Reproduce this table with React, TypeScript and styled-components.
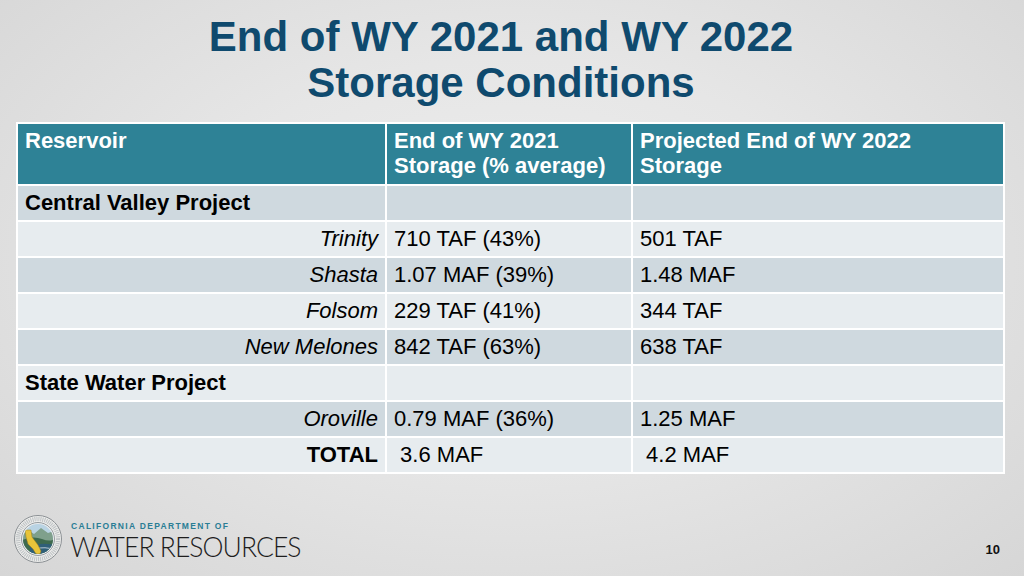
import React from "react";
import styled, { createGlobalStyle } from "styled-components";

const GlobalStyle = createGlobalStyle`
  * { box-sizing: border-box; }
  html, body { margin: 0; padding: 0; }
  body { font-family: "Liberation Sans", Arial, sans-serif; }
`;

const Slide = styled.div`
  width: 1024px;
  height: 576px;
  overflow: hidden;
  display: flex;
  flex-direction: column;
  background: radial-gradient(ellipse at 50% 45%, #eeeeee 0%, #e6e6e6 45%, #d6d6d6 100%);
`;

const Title = styled.h1`
  margin: 14px 0 0 0;
  padding-right: 22px;
  font-family: "Liberation Sans", Arial, sans-serif;
  font-weight: 700;
  font-size: 42px;
  line-height: 46px;
  color: #0f4a6e;
  text-align: center;
`;

const TableWrap = styled.div`
  margin: 16px 0 0 16px;
`;

const Table = styled.table`
  border-collapse: separate;
  border-spacing: 2px;
  background: #ffffff;
  width: 989px;
  table-layout: fixed;
  font-family: "Liberation Sans", Arial, sans-serif;
  font-size: 22px;
  color: #000;
`;

const HeadCell = styled.th`
  background: #2e8296;
  color: #ffffff;
  font-weight: 700;
  text-align: left;
  vertical-align: top;
  height: 60px;
  padding: 4px 7px 0 7px;
  line-height: 25px;
`;

const Row = styled.tr<{ $dark: boolean }>`
  background: ${(p) => (p.$dark ? "#cfd9df" : "#e7ecef")};
`;

const Cell = styled.td<{ $align?: "left" | "right"; $italic?: boolean; $bold?: boolean }>`
  height: 34px;
  padding: 0 7px;
  line-height: 24px;
  vertical-align: middle;
  white-space: nowrap;
  text-align: ${(p) => p.$align ?? "left"};
  font-style: ${(p) => (p.$italic ? "italic" : "normal")};
  font-weight: ${(p) => (p.$bold ? 700 : 400)};
`;

const Footer = styled.div`
  margin-top: auto;
  display: flex;
  justify-content: space-between;
  align-items: flex-end;
  padding: 0 24px 13px 14px;
`;

const Brand = styled.div`
  display: flex;
  align-items: center;
  gap: 8px;
`;

const BrandText = styled.div`
  display: flex;
  flex-direction: column;
  padding-top: 2px;
`;

const BrandSmall = styled.div`
  font-family: "Liberation Sans", Arial, sans-serif;
  font-weight: 700;
  font-size: 8.5px;
  letter-spacing: 1.3px;
  color: #2a7d95;
  line-height: 9px;
  margin-left: 1px;
`;

const BrandLarge = styled.div`
  font-family: Lato, "Open Sans", sans-serif;
  font-weight: 300;
  font-size: 26.5px;
  line-height: 24px;
  color: #1e1e1e;
  letter-spacing: -0.95px;
  margin-top: 4px;
`;

const PageNum = styled.div`
  font-family: "Liberation Sans", Arial, sans-serif;
  font-weight: 700;
  font-size: 13px;
  color: #111;
  margin-bottom: 6px;
`;

const Seal = () => (
  <svg width="48" height="48" viewBox="0 0 48 48">
    <circle cx="24" cy="24" r="23.5" fill="#f1f1ef" stroke="#8a8f93" strokeWidth="1" />
    <circle cx="24" cy="24" r="20" fill="none" stroke="#9aa3a8" strokeWidth="4.5" strokeDasharray="1.2 0.8" opacity="0.55" />
    <circle cx="24" cy="24" r="16.5" fill="#e9ecee" stroke="#7f878c" strokeWidth="0.8" />
    <clipPath id="inner">
      <circle cx="24" cy="24" r="15" />
    </clipPath>
    <g clipPath="url(#inner)">
      <rect x="0" y="0" width="48" height="48" fill="#b9d3e3" />
      <path d="M6 22 L14 15 L20 19 L27 13 L34 18 L42 15 L42 48 L6 48 Z" fill="#7fa08c" />
      <path d="M6 26 Q18 20 28 24 T42 22 L42 48 L6 48 Z" fill="#3e6a4e" />
      <path d="M16 31 Q26 27 42 30 L42 48 L16 48 Z" fill="#2f5f78" />
      <path d="M22 34 Q30 31 42 35" stroke="#b7c9d3" strokeWidth="1" fill="none" />
      <path d="M11 15 L17 15 L18 22 L24 30 L27 36 L26 39 L22 39 L19 34 L14 29 L12 22 Z" fill="#e8c43a" stroke="#9c7f1d" strokeWidth="0.5" />
    </g>
  </svg>
);

type DataRow =
  | { kind: "section"; label: string }
  | { kind: "item"; name: string; a: string; b: string; total?: boolean };

const rows: DataRow[] = [
  { kind: "section", label: "Central Valley Project" },
  { kind: "item", name: "Trinity", a: "710 TAF (43%)", b: "501 TAF" },
  { kind: "item", name: "Shasta", a: "1.07 MAF (39%)", b: "1.48 MAF" },
  { kind: "item", name: "Folsom", a: "229 TAF (41%)", b: "344 TAF" },
  { kind: "item", name: "New Melones", a: "842 TAF (63%)", b: "638 TAF" },
  { kind: "section", label: "State Water Project" },
  { kind: "item", name: "Oroville", a: "0.79 MAF (36%)", b: "1.25 MAF" },
  { kind: "item", name: "TOTAL", a: "\u00a03.6 MAF", b: "\u00a04.2 MAF", total: true },
];

export default function App() {
  return (
    <>
      <GlobalStyle />
      <Slide>
        <Title>
          End of WY 2021 and WY 2022
          <br />
          Storage Conditions
        </Title>
        <TableWrap>
          <Table>
            <colgroup>
              <col style={{ width: 367 }} />
              <col style={{ width: 244 }} />
              <col />
            </colgroup>
            <thead>
              <tr>
                <HeadCell>Reservoir</HeadCell>
                <HeadCell>
                  End of WY 2021
                  <br />
                  Storage (% average)
                </HeadCell>
                <HeadCell>
                  Projected End of WY 2022
                  <br />
                  Storage
                </HeadCell>
              </tr>
            </thead>
            <tbody>
              {rows.map((r, i) => (
                <Row key={i} $dark={i % 2 === 0}>
                  {r.kind === "section" ? (
                    <>
                      <Cell $bold>{r.label}</Cell>
                      <Cell />
                      <Cell />
                    </>
                  ) : (
                    <>
                      <Cell $align="right" $italic={!r.total} $bold={r.total}>
                        {r.name}
                      </Cell>
                      <Cell>{r.a}</Cell>
                      <Cell>{r.b}</Cell>
                    </>
                  )}
                </Row>
              ))}
            </tbody>
          </Table>
        </TableWrap>
        <Footer>
          <Brand>
            <Seal />
            <BrandText>
              <BrandSmall>CALIFORNIA DEPARTMENT OF</BrandSmall>
              <BrandLarge>WATER RESOURCES</BrandLarge>
            </BrandText>
          </Brand>
          <PageNum>10</PageNum>
        </Footer>
      </Slide>
    </>
  );
}
